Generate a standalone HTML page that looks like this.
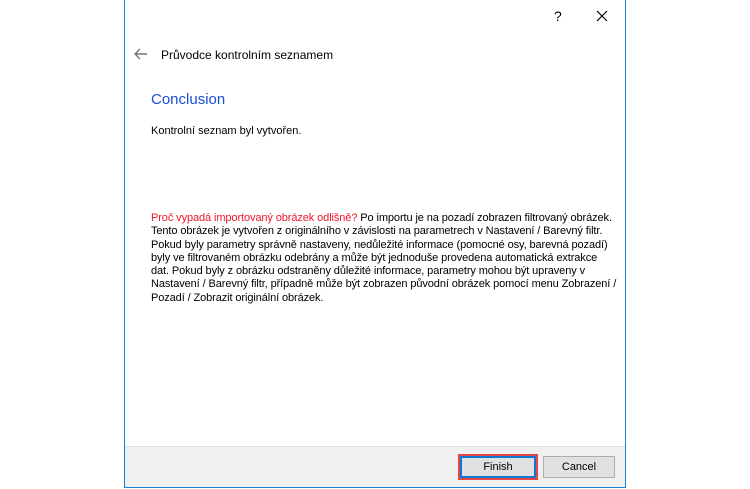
<!DOCTYPE html>
<html><head><meta charset="utf-8"><style>
body{margin:0;width:750px;height:489px;background:#fff;position:relative;overflow:hidden;font-family:"Liberation Sans",sans-serif;font-size:11px;color:#000}
.win{position:absolute;left:124px;top:0;width:500px;height:487px;border:1px solid #1883d7;border-top:none;background:#fff}
.ft{position:absolute;left:0;right:0;bottom:0;height:40px;background:#f0f0f0;border-top:1px solid #dfdfdf}
.t{position:absolute;white-space:nowrap}
.btn{position:absolute;box-sizing:border-box;background:#e1e1e1;border:1px solid #adadad;text-align:center;font-size:11px}
</style></head><body>
<div class="win">
<div class="t" style="left:429px;top:8px;font-size:14px">?</div>
<svg style="position:absolute;left:471px;top:10px" width="12" height="12"><path d="M1 1L11 11M11 1L1 11" stroke="#000" stroke-width="1.2"/></svg>
<svg style="position:absolute;left:9px;top:48px" width="14" height="12"><path d="M1 6H13M6 1L1 6L6 11" stroke="#777" stroke-width="1.4" fill="none"/></svg>
<div class="t" style="left:36px;top:48px;font-size:12px">Průvodce kontrolním seznamem</div>
<div class="t" style="left:26px;top:91px;font-size:15px;color:#1a4fd1">Conclusion</div>
<div class="t" style="left:26px;top:125px">Kontrolní seznam byl vytvořen.</div>
<div style="position:absolute;left:26px;top:212px;width:475px;line-height:13.3px;font-size:11px;letter-spacing:-0.1px"><span style="color:#f0142d">Proč vypadá importovaný obrázek odlišně?</span> Po importu je na pozadí zobrazen filtrovaný obrázek.<br>Tento obrázek je vytvořen z originálního v závislosti na parametrech v Nastavení / Barevný filtr.<br>Pokud byly parametry správně nastaveny, nedůležité informace (pomocné osy, barevná pozadí)<br>byly ve filtrovaném obrázku odebrány a může být jednoduše provedena automatická extrakce<br>dat. Pokud byly z obrázku odstraněny důležité informace, parametry mohou být upraveny v<br>Nastavení / Barevný filtr, případně může být zobrazen původní obrázek pomocí menu Zobrazení /<br>Pozadí / Zobrazit originální obrázek.</div>
<div class="ft">
<div style="position:absolute;left:333px;top:7px;width:80px;height:26px;background:#e84545;box-sizing:border-box;padding:2px">
<div style="width:100%;height:100%;box-sizing:border-box;border:2px solid #0b78d7;background:#e1e1e1;text-align:center;line-height:18px">Finish</div></div>
<div class="btn" style="left:418px;top:9px;width:72px;height:22px;line-height:20px">Cancel</div>
</div>
</div>
</body></html>
